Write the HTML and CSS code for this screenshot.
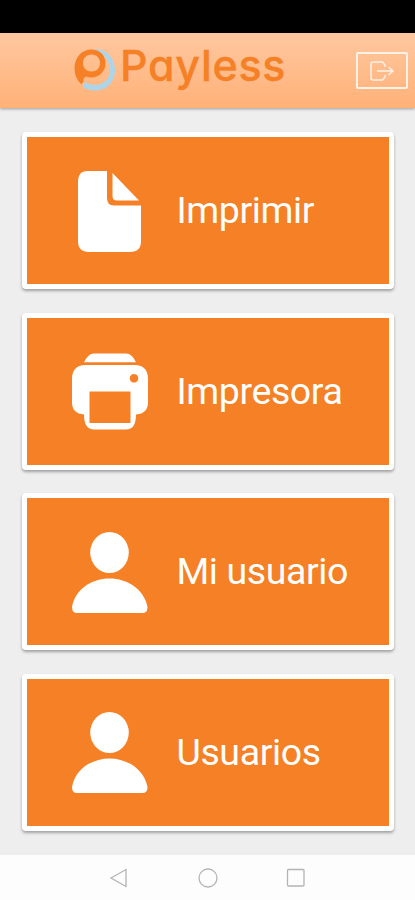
FILE: index.html
```html
<!DOCTYPE html>
<html lang="es">
<head>
<meta charset="utf-8">
<title>Payless</title>
<link rel="stylesheet" href="styles.css">
</head>
<body>
<div class="status"></div>
<header class="header">
  <svg class="logo" viewBox="0 0 44 44" aria-hidden="true">
    <path class="ring" d="M20 1C33 0 42 10 42 22C42 34 33.500 42.500 22 42.500C17 42.500 13 41 9.500 38.500L12 34Q16 37 21 37C30 37 37 31 37 22C37 13 30 4 20 1Z"/>
    <path class="mark" fill-rule="evenodd" d="M18.500 1.500C26.500 1.500 32.500 7 32.500 15S26.500 29.500 18.500 29.500Q15.500 29.500 13 28.500Q10 30 10.500 33L8.500 36.500Q1.500 30 1.500 20.500C1.500 9.500 8.500 1.500 18.500 1.500ZM18.500 6.500C13.500 6.500 10 10 10 15S13.500 23.500 18.500 23.500S27 20 27 15S23.500 6.500 18.500 6.500Z"/>
  </svg>
  <h1 class="brand">Payless</h1>
  <button class="logout" aria-label="Salir">
    <svg viewBox="0 0 24 20"><path d="M15 6V4L12.500 1H3Q1 1 1 3V17Q1 19 3 19H12.500L15 16V14M7 10H23M18.500 6l4.500 4-4.500 4"/></svg>
  </button>
</header>
<main class="menu">
  <a class="card">
    <svg class="icon" viewBox="0 0 76 82"><path d="M15.500 0H35V27Q35 34.500 42 34.500H69V70Q69 81 58 81H17Q6 81 6 70V11Q6 0 15.500 0ZM40.500 2 67 29.500H45Q40.500 29.500 40.500 25Z"/></svg>
    <span class="label">Imprimir</span>
  </a>
  <a class="card">
    <svg class="icon" viewBox="0 0 76 82"><path fill-rule="evenodd" d="M12 11.200Q16 2.500 22 2.500H54Q60 2.500 64 11.200ZM12 14H64Q76 15 76 28V51.500Q76 62.500 64 63.500Q64 78.500 54 78.500H22Q12 78.500 12 63.500Q0 62.500 0 51.500V28Q0 15 12 14ZM17.500 40.500V72H58.500V40.500ZM62 23a4.300 4.300 0 1 0 .010 0Z"/></svg>
    <span class="label">Impresora</span>
  </a>
  <a class="card">
    <svg class="icon" viewBox="0 0 76 82"><ellipse cx="37.500" cy="20.500" rx="19.300" ry="20.500"/><path d="M5 81Q0 81 0 75C3 57 20 46.500 37.500 46.500S72 57 75.500 75Q75.500 81 70.500 81Z"/></svg>
    <span class="label">Mi usuario</span>
  </a>
  <a class="card">
    <svg class="icon" viewBox="0 0 76 82"><ellipse cx="37.500" cy="20.500" rx="19.300" ry="20.500"/><path d="M5 81Q0 81 0 75C3 57 20 46.500 37.500 46.500S72 57 75.500 75Q75.500 81 70.500 81Z"/></svg>
    <span class="label">Usuarios</span>
  </a>
</main>
<nav class="nav">
  <svg viewBox="0 0 20 20"><path d="M2 10 17 1.500V18.500Z"/></svg>
  <svg viewBox="0 0 20 20"><circle cx="10" cy="10" r="9"/></svg>
  <svg viewBox="0 0 20 20"><rect x="1.500" y="1.500" width="16.500" height="16.500" rx="1"/></svg>
</nav>
</body>
</html>
```
FILE: styles.css
```css
* { box-sizing: border-box; }
body {
  margin: 0;
  height: 900px;
  display: flex;
  flex-direction: column;
  overflow: hidden;
  background: #eee;
  font-family: Roboto, "Liberation Sans", sans-serif;
}
.status { height: 33px; flex: none; background: #000; }
.header {
  height: 75px;
  flex: none;
  display: flex;
  align-items: flex-start;
  padding: 15px 7px 0 73px;
  background: linear-gradient(#ffc8a0, #ffb177);
  box-shadow: 0 1px 3px rgba(0, 0, 0, .35);
}
.logo { width: 44px; height: 44px; flex: none; }
.ring { fill: #add5ea; }
.mark { fill: #f58025; }
.brand {
  margin: -9px 0 0 3px;
  font: 500 43px/52px Inter, sans-serif;
  font-feature-settings: "cv11";
  letter-spacing: .7px;
  color: #f58025;
  -webkit-text-stroke: .3px #f58025;
  white-space: nowrap;
}
.logout {
  width: 52px;
  height: 37px;
  margin: 4px 0 0 auto;
  padding: 0;
  border: 2px solid #fff1e6;
  border-radius: 2px;
  background: none;
  display: grid;
  place-items: center;
}
.logout svg { width: 24px; height: 20px; fill: none; stroke: #fff1e6; stroke-width: 1.5; }
.menu {
  height: 747px;
  flex: none;
  display: flex;
  flex-direction: column;
  gap: 23.500px;
  padding: 24px 21px 0 22px;
}
.card {
  height: 157px;
  flex: none;
  display: flex;
  align-items: center;
  padding: 2px 0 0 45px;
  border: 5px solid #fff;
  border-radius: 4px;
  background: #f58025;
  box-shadow: 0 2px 3px rgba(0, 0, 0, .32);
}
.icon { width: 76px; height: 82px; flex: none; fill: #fff; }
.label {
  margin: -3px 0 0 28.500px;
  font-size: 37.500px;
  line-height: 44px;
  letter-spacing: -.4px;
  color: #fff;
  white-space: nowrap;
}
.nav {
  flex: 1;
  display: flex;
  justify-content: space-between;
  align-items: flex-start;
  padding: 13px 109px 0;
  background: #fdfdfd;
}
.nav svg { width: 20px; height: 20px; fill: none; stroke: #b4b4b4; stroke-width: 1.3; }
```
